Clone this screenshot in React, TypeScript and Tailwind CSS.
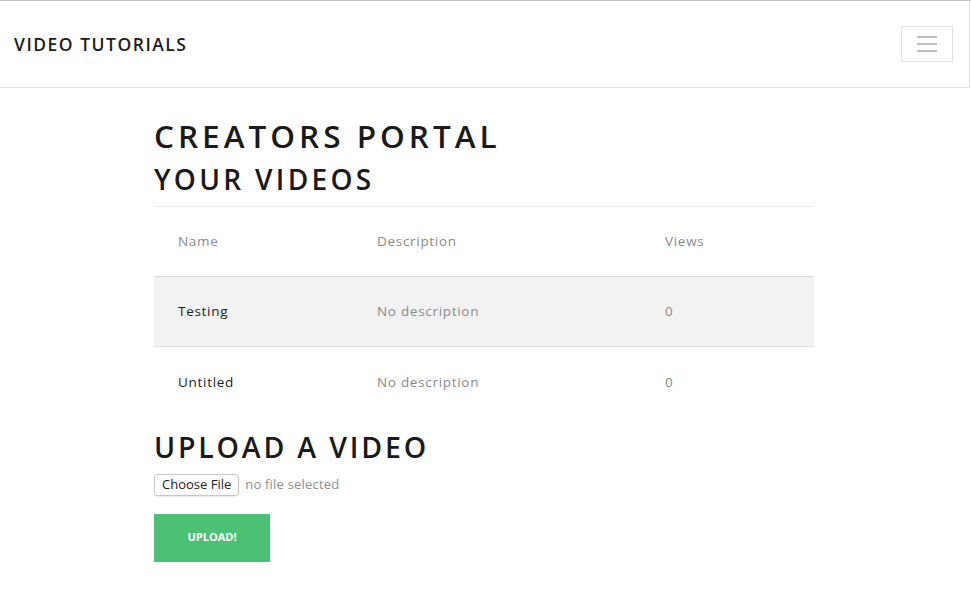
export default function App() {
  const videos = [
    { id: 1, name: "Testing", description: "No description", views: 0 },
    { id: 2, name: "Untitled", description: "No description", views: 0 },
  ];

  return (
    <div className="min-h-[599px] w-[971px] bg-white text-[#1a1a1a]" style={{ fontFamily: "'Open Sans', 'Noto Sans', sans-serif" }}>
      {/* Navbar */}
      <div className="border-t border-[#c8c8c8]">
        <nav className="h-[87px] border-b border-r border-[#e3e3e3] flex items-center justify-between pl-[14px] pr-[16px] mr-[1px]">
          <span className="text-[17.5px] font-semibold tracking-[1.5px] text-[#1d1d1d]">VIDEO TUTORIALS</span>
          <button type="button" className="w-[52px] h-[36px] border border-[#e0e0e0] flex flex-col items-center justify-center gap-[5px]">
            <span className="block w-[20px] h-[2px] bg-[#bdbdbd]" />
            <span className="block w-[20px] h-[2px] bg-[#bdbdbd]" />
            <span className="block w-[20px] h-[2px] bg-[#bdbdbd]" />
          </button>
        </nav>
      </div>

      <main className="ml-[154px] w-[660px] pt-[27px]">
        <h1 className="text-[31.5px] leading-[42px] font-semibold tracking-[4px]">CREATORS PORTAL</h1>
        <h2 className="text-[28px] leading-[40px] font-semibold tracking-[3.3px] mt-[2px]">YOUR VIDEOS</h2>

        <table className="w-full text-left mt-[7px] border-t border-[#eeeeee] text-[13.5px] tracking-[0.7px]">
          <thead>
            <tr className="border-b border-[#dcdcdc] h-[70px]">
              <th className="w-[199px] pl-[24px] font-normal text-[#8a8a8a]">Name</th>
              <th className="w-[288px] pl-[24px] font-normal text-[#8a8a8a]">Description</th>
              <th className="pl-[24px] font-normal text-[#8a8a8a]">Views</th>
            </tr>
          </thead>
          <tbody>
            {videos.map((v, i) => (
              <tr key={v.id} className={i === 0 ? "h-[70px] bg-[#f2f2f2] border-b border-[#dcdcdc]" : "h-[70px]"}>
                <td className="pl-[24px] text-[#1d1d1d]">{v.name}</td>
                <td className="pl-[24px] text-[#8a8a8a]">{v.description}</td>
                <td className="pl-[24px] text-[#8a8a8a]">{v.views}</td>
              </tr>
            ))}
          </tbody>
        </table>

        <h2 className="text-[28.5px] leading-[40px] font-semibold tracking-[2.8px] mt-[10px]">UPLOAD A VIDEO</h2>

        <div className="flex items-center mt-[7px] h-[22px]">
          <button type="button" className="h-[22px] px-[7px] border border-[#c6c6c6] rounded-[4px] bg-white text-[13px] text-[#1d1d1d] shadow-[0_1px_1px_rgba(0,0,0,0.08)]">
            Choose File
          </button>
          <span className="ml-[6px] text-[13px] tracking-[0.2px] text-[#8e8e8e]">no file selected</span>
        </div>

        <button type="button" className="mt-[18px] w-[116px] h-[48px] bg-[#4cc174] text-white text-[11px] font-bold">
          UPLOAD!
        </button>
      </main>
    </div>
  );
}
